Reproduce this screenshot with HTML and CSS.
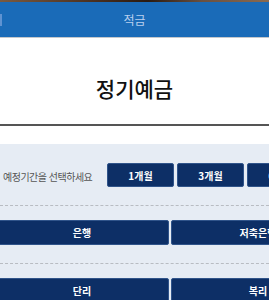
FILE: index.html
```html
<!DOCTYPE html>
<html lang="ko">
<head>
<meta charset="utf-8">
<link rel="stylesheet" href="styles.css">
</head>
<body>
<div class="page">
  <div class="topstrip"></div>
  <header class="appbar">
    <span class="edge"></span>
    <span class="appbar-title">적금</span>
  </header>
  <section class="hero">
    <h1 class="hero-title">정기예금</h1>
  </section>
  <div class="gap"></div>
  <section class="panel">
    <div class="row period">
      <span class="label">예정기간을 선택하세요</span>
      <div class="btns">
        <button class="btn small">1개월</button>
        <button class="btn small">3개월</button>
        <button class="btn small">6개월</button>
      </div>
    </div>
    <div class="dash"></div>
    <div class="row wide">
      <button class="btn big">은행</button>
      <button class="btn big">저축은행</button>
    </div>
    <div class="dash"></div>
    <div class="row wide">
      <button class="btn big">단리</button>
      <button class="btn big">복리</button>
    </div>
  </section>
</div>
</body>
</html>
```
FILE: styles.css
```css
html, body {
  margin: 0;
  padding: 0;
  background: #ffffff;
}
body {
  width: 269px;
  height: 300px;
  overflow: hidden;
  font-family: "Noto Sans CJK KR", "Noto Sans", sans-serif;
}
.page {
  width: 269px;
}
.topstrip {
  height: 2px;
  background: linear-gradient(90deg, #7a5a40 0%, #4a3020 35%, #2a1a10 55%, #6a5040 75%, #8a6a50 100%);
}
.appbar {
  position: relative;
  height: 35px;
  background: #1a6bb8;
  border-bottom: 1px solid #c4c8cc;
  display: flex;
  align-items: center;
  justify-content: center;
}
.edge {
  position: absolute;
  left: 0;
  top: 12px;
  width: 2px;
  height: 12px;
  background: #5f93d2;
}
.appbar-title {
  color: #b9cfee;
  font-size: 12px;
  line-height: 1;
  margin-top: 1px;
}
.hero {
  height: 86px;
  display: flex;
  align-items: center;
  justify-content: center;
  border-bottom: 2px solid #555555;
}
.hero-title {
  margin: 0;
  font-size: 21px;
  font-weight: 500;
  color: #111111;
  line-height: 1;
  margin-top: 14px;
}
.gap {
  height: 18px;
  background: #ffffff;
}
.panel {
  background: #e6ecf4;
  padding-top: 19px;
  height: 140px;
}
.row {
  display: flex;
  align-items: center;
}
.period {
  height: 24px;
}
.label {
  flex: none;
  box-sizing: border-box;
  width: 107px;
  padding-left: 3px;
  font-size: 10px;
  color: #555555;
  letter-spacing: -0.5px;
  white-space: nowrap;
  margin-top: 2px;
}
.btns {
  display: flex;
  gap: 3px;
  flex: none;
}
.btn {
  box-sizing: border-box;
  background: #0d2f66;
  color: #ffffff;
  border: 1px solid #30548a;
  border-radius: 2px;
  font-family: "Noto Sans CJK KR", "Noto Sans", sans-serif;
  font-size: 10px;
  font-weight: 700;
  padding: 0;
  margin: 0;
  flex: none;
}
.small {
  width: 67px;
  height: 24px;
}
.dash {
  height: 0;
  border-top: 1px dashed #b8bcc2;
  margin: 18px 0 14px;
}
.wide {
  gap: 2px;
  margin-left: -5px;
}
.big {
  width: 174px;
  height: 25px;
}
```
